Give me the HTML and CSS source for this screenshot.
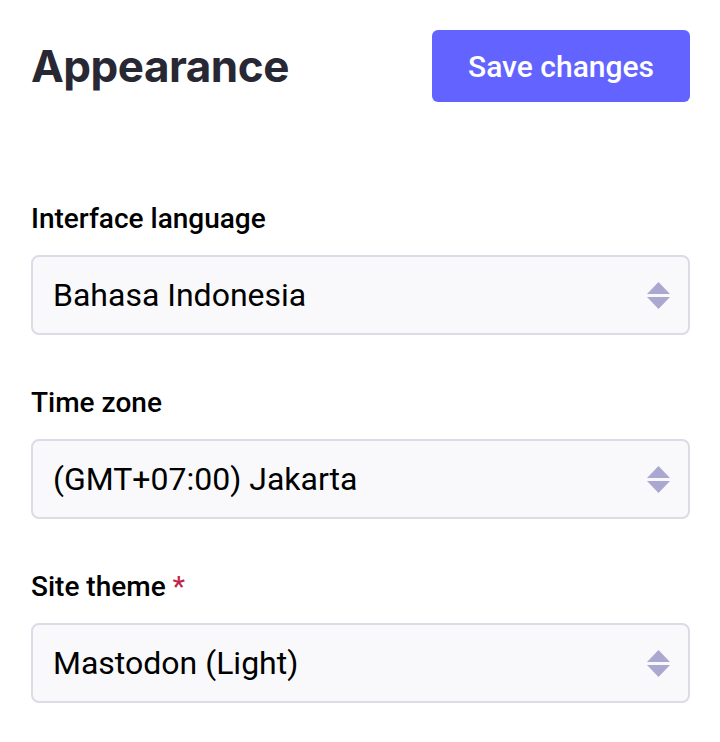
FILE: index.html
```html
<!DOCTYPE html>
<html>
<head>
<meta charset="utf-8">
<link rel="stylesheet" href="styles.css">
</head>
<body>
<div class="page">
  <div class="header">
    <h1 class="title">Appearance</h1>
    <button class="save">Save changes</button>
  </div>
  <div class="fields">
    <div class="field">
      <label class="label">Interface language</label>
      <div class="select">
        <span class="value">Bahasa Indonesia</span>
        <svg class="arrows" width="23" height="27" viewBox="0 0 23 27"><polygon points="11.5,0 23,12 0,12"/><polygon points="0,15 23,15 11.5,27"/></svg>
      </div>
    </div>
    <div class="field">
      <label class="label">Time zone</label>
      <div class="select">
        <span class="value">(GMT+07:00) Jakarta</span>
        <svg class="arrows" width="23" height="27" viewBox="0 0 23 27"><polygon points="11.5,0 23,12 0,12"/><polygon points="0,15 23,15 11.5,27"/></svg>
      </div>
    </div>
    <div class="field">
      <label class="label">Site theme <span class="req">*</span></label>
      <div class="select">
        <span class="value">Mastodon (Light)</span>
        <svg class="arrows" width="23" height="27" viewBox="0 0 23 27"><polygon points="11.5,0 23,12 0,12"/><polygon points="0,15 23,15 11.5,27"/></svg>
      </div>
    </div>
  </div>
</div>
</body>
</html>
```
FILE: styles.css
```css
html, body {
  margin: 0;
  padding: 0;
  background: #ffffff;
}
.page {
  padding: 30px 30px 0 31px;
  font-family: Roboto, "Liberation Sans", sans-serif;
}
.header {
  display: flex;
  justify-content: space-between;
  align-items: center;
  height: 72px;
}
.title {
  margin: 0;
  font-family: Inter, "Liberation Sans", sans-serif;
  font-weight: 700;
  font-size: 44px;
  line-height: 56px;
  color: #282834;
  letter-spacing: -0.5px;
}
.save {
  width: 258px;
  height: 72px;
  border: none;
  border-radius: 6px;
  background: #6364ff;
  color: #ffffff;
  font-family: Roboto, "Liberation Sans", sans-serif;
  font-weight: 500;
  font-size: 30px;
  padding: 0;
}
.fields {
  display: flex;
  flex-direction: column;
  gap: 52px;
  margin-top: 101px;
}
.field {
  display: flex;
  flex-direction: column;
  gap: 20px;
}
.label {
  font-size: 28px;
  line-height: 32px;
  font-weight: 500;
  color: #000000;
}
.req {
  color: #c0264b;
}
.select {
  display: flex;
  align-items: center;
  justify-content: space-between;
  height: 80px;
  box-sizing: border-box;
  border: 2px solid #dcdbe6;
  border-radius: 8px;
  background: #f9f9fb;
  padding: 0 18px 0 20px;
}
.value {
  font-size: 32px;
  color: #000000;
}
.arrows {
  fill: #aaa7d0;
}
```
